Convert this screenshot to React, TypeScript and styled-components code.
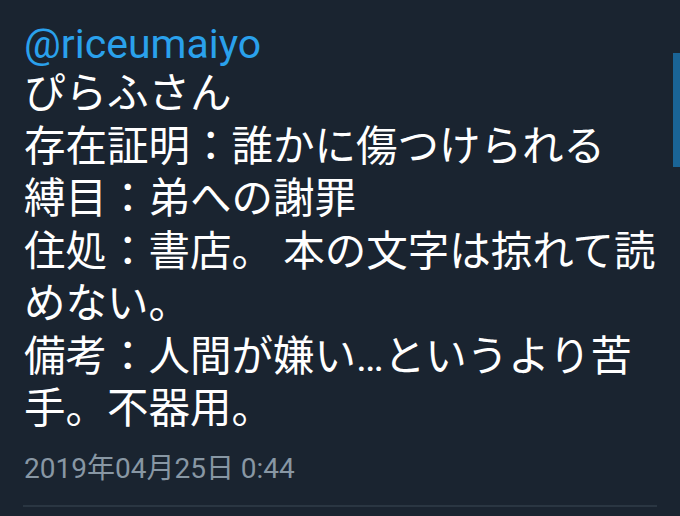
import React from "react";
import styled, { createGlobalStyle } from "styled-components";

const Global = createGlobalStyle`
  html, body { margin: 0; padding: 0; background: #1a2430; }
  body { width: 680px; height: 516px; overflow: hidden; }
`;

const Page = styled.div`
  position: relative;
  width: 680px;
  height: 516px;
  background: #1a2430;
  box-sizing: border-box;
  padding: 20px 0 0 24px;
  display: flex;
  flex-direction: column;
  font-family: Roboto, "Noto Sans CJK JP", sans-serif;
`;

const Handle = styled.div`
  color: #2aa1ec;
  font-size: 41px;
  line-height: 48px;
`;

const Body = styled.div`
  color: #ffffff;
  font-size: 41.5px;
  line-height: 52.5px;
  white-space: pre-wrap;
`;

const DateLine = styled.div`
  margin-top: 16px;
  color: #8897a4;
  font-size: 28px;
  line-height: 34px;
`;

const Divider = styled.div`
  margin: 19px 23px 0 -1px;
  height: 2px;
  background: #2a3642;
`;

const Scrollbar = styled.div`
  position: absolute;
  right: 0;
  top: 53px;
  width: 7px;
  height: 114px;
  background: #1a6496;
`;

const lines = [
  "ぴらふさん",
  "存在証明：誰かに傷つけられる",
  "縛目：弟への謝罪",
  "住処：書店。 本の文字は掠れて読",
  "めない。",
  "備考：人間が嫌い…というより苦",
  "手。不器用。",
];

export default function App() {
  return (
    <>
      <Global />
      <Page>
        <Handle>@riceumaiyo</Handle>
        <Body>{lines.join("\n")}</Body>
        <DateLine>2019年04月25日 0:44</DateLine>
        <Divider />
        <Scrollbar />
      </Page>
    </>
  );
}
